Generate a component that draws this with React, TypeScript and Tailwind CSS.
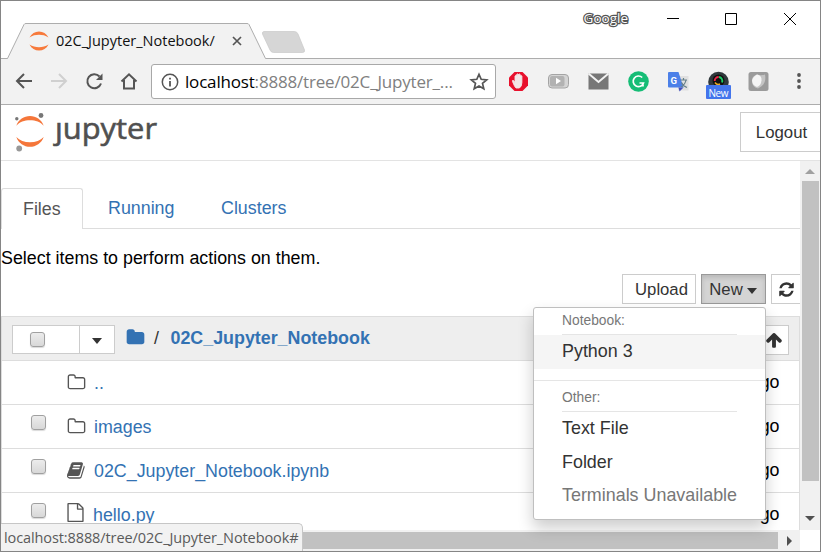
import type { ReactNode } from 'react';

const paths = {
  folderOpen:
    'M1600 1312v-704q0-40-28-68t-68-28h-704q-40 0-68-28t-28-68v-64q0-40-28-68t-68-28h-320q-40 0-68 28t-28 68v960q0 40 28 68t68 28h1216q40 0 68-28t28-68zm128-704v704q0 92-66 158t-158 66h-1216q-92 0-158-66t-66-158v-960q0-92 66-158t158-66h320q92 0 158 66t66 158v32h672q92 0 158 66t66 158z',
  folder:
    'M1728 608v704q0 92-66 158t-158 66h-1216q-92 0-158-66t-66-158v-960q0-92 66-158t158-66h320q92 0 158 66t66 158v32h672q92 0 158 66t66 158z',
  book:
    'M1639 478q40 57 18 129l-275 906q-19 64-76.500 107.500t-122.500 43.500h-923q-77 0-148.500-53.500t-99.500-131.500q-24-67-2-127 0-4 3-27t4-37q1-8-3-21.500t-3-19.500q2-11 8-21t16.500-23.500 16.500-23.500q23-38 45-91.500t30-91.500q3-10 .5-30t-.5-28q3-11 17-28t17-23q21-36 42-92t25-90q1-9-2.500-32t.5-28q4-13 22-30.500t22-22.500q19-26 42.500-84.500t27.500-96.500q1-8-3-25.500t-2-26.500q2-8 9-18t18-23 17-21q8-12 16.500-30.500t15-35 16-36 19.500-32 26.500-23.500 36-11.500 47.500 5.500l-1 3q38-9 51-9h761q74 0 114 56t18 130l-274 906q-36 119-71.500 153.500t-128.500 34.500h-869q-27 0-38 15-11 16-1 43 24 70 144 70h923q29 0 56-15.500t35-41.500l300-987q7-22 5-57 38 15 59 43zm-1064 2q-4 13 2 22.500t20 9.500h608q13 0 25.500-9.500t16.500-22.500l21-64q4-13-2-22.500t-20-9.500h-608q-13 0-25.500 9.500t-16.500 22.500zm-83 256q-4 13 2 22.500t20 9.500h608q13 0 25.500-9.500t16.500-22.500l21-64q4-13-2-22.500t-20-9.500h-608q-13 0-25.500 9.500t-16.500 22.500z',
  file:
    'M1596 380q28 28 48 76t20 88v1152q0 40-28 68t-68 28h-1344q-40 0-68-28t-28-68v-1600q0-40 28-68t68-28h896q40 0 88 20t76 48zm-444-244v376h376q-10-29-22-41l-313-313q-12-12-41-22zm384 1528v-1024h-416q-40 0-68-28t-28-68v-416h-768v1536h1280z',
  refresh:
    'M1639 1056q0 5-1 7-64 268-268 434.500t-478 166.500q-146 0-282.500-55t-243.500-157l-129 129q-19 19-45 19t-45-19-19-45v-448q0-26 19-45t45-19h448q26 0 45 19t19 45-19 45l-137 137q71 66 161 102t187 36q134 0 250-65t186-179q11-17 53-117 8-23 30-23h192q13 0 22.500 9.500t9.500 22.500zm25-800v448q0 26-19 45t-45 19h-448q-26 0-45-19t-19-45 19-45l138-138q-148-137-349-137-134 0-250 65t-186 179q-11 17-53 117-8 23-30 23h-199q-13 0-22.500-9.500t-9.500-22.500v-7q65-268 270-434.500t480-166.500q146 0 284 55.500t245 156.500l130-129q19-19 45-19t45 19 19 45z',
  arrowUp:
    'M1675 971q0 51-37 90l-75 75q-38 38-91 38-54 0-90-38l-294-293v704q0 52-37.500 84.500t-90.500 32.500h-128q-53 0-90.500-32.500t-37.500-84.500v-704l-294 293q-36 38-90 38t-90-38l-75-75q-38-38-38-90 0-53 38-91l651-651q35-37 90-37 54 0 91 37l651 651q37 39 37 91z',
};

function Glyph({ name, className }: { name: keyof typeof paths; className: string }) {
  return (
    <svg viewBox="0 0 1792 1792" className={'shrink-0 fill-current ' + className}>
      <path d={paths[name]} />
    </svg>
  );
}

function Checkbox() {
  return (
    <span className="block size-[15px] shrink-0 rounded-[3px] border border-[#a0a0a0] bg-linear-to-b from-[#ececec] to-[#d8d8d8] shadow-[0_1px_1px_rgba(0,0,0,0.15)]" />
  );
}

function Caret() {
  return <span className="block border-x-[5.5px] border-t-[6px] border-x-transparent border-t-[#333]" />;
}

function TitleBar() {
  return (
    <div className="relative flex h-[58px] shrink-0 border-b border-[#adadad] bg-white">
      <svg className="absolute left-0 top-0" width="320" height="58" viewBox="1 1 320 58">
        <path d="M1 58.5H7.500L24 24.500Q24.500 23.500 26 23.500H247Q248.500 23.500 249 24.500L265.500 58.500V60H1Z" fill="#f2f2f2" />
        <path d="M1 58.500H7.500L24 24.500Q24.500 23.500 26 23.500H247Q248.500 23.500 249 24.500L265.500 58.500" fill="none" stroke="#adadad" />
        <path d="M264 31.500H294.500Q297 31.500 298 34L304.500 50Q305 52.500 302.500 52.500H273.500Q271 52.500 270 50L262.500 34Q262 31.500 264 31.500Z" fill="#d6d6d6" stroke="#c9c9c9" strokeWidth=".7" />
      </svg>
      <div className="relative flex h-[35px] w-[264px] items-center self-end pl-[28px]">
        <svg width="20" height="20" viewBox="0 0 20 20" className="shrink-0 fill-[#f77a3c]">
          <path d="M.5 6.500C2.500 2.500 6 .5 10 .5s7.500 2 9.500 6C16.500 4.500 13.500 3.800 10 3.800S3.500 4.500.5 6.500Z" />
          <path d="M.5 13.500c2 4 5.500 6 9.500 6s7.500-2 9.500-6c-3 2-6 2.700-9.500 2.700S3.500 15.500.5 13.500Z" />
        </svg>
        <span className="ml-[7px] w-[159px] whitespace-nowrap font-['Open_Sans',sans-serif] text-[14.500px] text-[#111]">
          02C_Jupyter_Notebook/
        </span>
        <svg width="10" height="10" viewBox="0 0 10 10" className="ml-[17px] stroke-[#555]" strokeWidth="1.700">
          <path d="M1 1l8 8M9 1L1 9" />
        </svg>
      </div>
      <div className="ml-auto flex h-[36px] items-center">
        <span className="mr-[38px] font-['Open_Sans',sans-serif] text-[13.500px] leading-none text-white [-webkit-text-stroke:2.5px_#555] [paint-order:stroke_fill]">
          Google
        </span>
        <svg width="154" height="16" viewBox="0 0 154 16" fill="none" stroke="#000">
          <path d="M1 7.500h12M59.500 2.500h11v11h-11zM118 2l12 12M130 2l-12 12" />
        </svg>
      </div>
    </div>
  );
}

function Extensions() {
  return (
    <svg width="312" height="44" viewBox="508 60 312 44" className="ml-auto shrink-0">
      <path d="M514.500 72h8l5.500 5.500v8l-5.500 5.500h-8l-5.500-5.500v-8Z" fill="#e8112d" />
      <path d="M514.500 86l-2-4.500q-.5-1.500 1-1l1.500 2v-6.500q.8-1.200 1.600 0v3.500v-5q.9-1.200 1.800 0v5v-5q.9-1.200 1.800 0v5.500v-4q.8-1.200 1.700 0v6.500q0 4-2.500 5.500h-3.400Z" fill="#f3e6e7" stroke="#f3e6e7" strokeWidth=".9" />
      <rect x="548.500" y="74.500" width="20" height="13.500" rx="3.500" fill="#d4d4d4" stroke="#a4a4a4" />
      <rect x="550" y="76" width="14.500" height="10.500" rx="2" fill="#b2b2b2" />
      <path d="M556 77.800v6.400l5-3.200Z" fill="#fff" />
      <path d="M588.500 73.500h20v16h-20Z" fill="#777" />
      <path d="M588.500 73.500l10 8.500 10-8.500" fill="none" stroke="#f2f2f2" strokeWidth="2" />
      <circle cx="638.500" cy="81.500" r="10.300" fill="#16bd76" />
      <path d="M642.200 77.500A5.300 5.300 0 1 0 643.500 83h-4M643 82.500v4" fill="none" stroke="#fff" strokeWidth="1.700" />
      <path d="M678 76h10.500V90.500H678Z" fill="#e0e0e0" />
      <path d="M669 72h9.500l5 15.500h-14.500q-1 0-1-1v-13.500q0-1 1-1Z" fill="#4c80e8" />
      <path d="M678.500 87.500h5l-4 4Z" fill="#4350bd" />
      <text x="670.500" y="83.500" fill="#fff" fontFamily="Roboto" fontSize="9.500" fontWeight="700">G</text>
      <path d="M680.500 80h6.500M683.500 78v2M686 80q-1 5-5 7M681.500 82.500q2 4 5.500 5" fill="none" stroke="#66808a" strokeWidth="1.200" />
      <circle cx="718.500" cy="82" r="10.300" fill="#30383c" />
      <circle cx="718.500" cy="80.500" r="6" fill="#111" />
      <path d="M714.700 81a4 4 0 0 1 4-4" stroke="#ed2648" strokeWidth="1.800" fill="none" />
      <path d="M719 77a4 4 0 0 1 3 5.500" stroke="#1ccf67" strokeWidth="1.800" fill="none" />
      <path d="M715 82.500q2 3 5 1.500" stroke="#e9aa24" strokeWidth="1.500" fill="none" />
      <rect x="706" y="85" width="25" height="14" rx="1" fill="#4375ec" />
      <text x="708.500" y="96.500" fill="#fff" fontFamily="Open Sans" fontSize="10" textLength="20">New</text>
      <rect x="748.500" y="72" width="20" height="19" rx="2.500" fill="#9b9b9b" />
      <path d="M757 74.500q4.500 1.500 8 0 2 10-7 14-6.500-2-6-8.500 0-4 5-5.500Z" fill="#c4c4c4" />
      <path d="M757 74.500q5 1 4.500 6-.5 5-4.500 6.500-4.500-1.500-5-6.500 1-4 5-6Z" fill="#f5f5f5" />
      <g fill="#555">
        <circle cx="799" cy="75" r="1.900" />
        <circle cx="799" cy="81" r="1.900" />
        <circle cx="799" cy="87" r="1.900" />
      </g>
    </svg>
  );
}

function Toolbar() {
  return (
    <div className="flex h-[46px] shrink-0 items-center border-b border-[#adadad] bg-[#f2f2f2]">
      <svg width="150" height="44" viewBox="1 60 150 44" fill="none" stroke="#555" strokeWidth="2" className="shrink-0">
        <path d="M32 81H17.500M24 74l-7 7 7 7" />
        <path d="M51 81h14.500M59 74l7 7-7 7" stroke="#d0d0d0" />
        <path d="M99.500 76.500A7 7 0 1 0 101 83.500" />
        <path d="M102.500 73.500v6.500h-6.500Z" fill="#555" stroke="none" />
        <path d="M121.500 81.500l7.500-7.200 7.500 7.200M124 80v8.500h10V80" />
      </svg>
      <div className="flex h-[35px] w-[345px] shrink-0 items-center rounded-[3px] border border-[#a8a8a8] bg-white pl-[9px]">
        <svg width="18" height="18" viewBox="0 0 18 18" fill="none" stroke="#555" className="shrink-0">
          <circle cx="9" cy="9" r="7.700" strokeWidth="1.500" />
          <path d="M9 8v5.500M9 4.700v1.800" strokeWidth="1.800" />
        </svg>
        <span className="ml-[6px] w-[270px] whitespace-nowrap font-['Open_Sans',sans-serif] text-[17px] tracking-[-0.18px] text-[#808080]">
          <span className="text-black">localhost</span>:8888/tree/02C_Jupyter_...
        </span>
        <svg width="20" height="20" viewBox="0 0 20 20" fill="none" stroke="#555" strokeWidth="1.700" className="ml-[14px] shrink-0">
          <path d="M10 2.300l2.200 5 5.500.5-4.200 3.600 1.300 5.400-4.800-2.900-4.800 2.900 1.300-5.400-4.200-3.600 5.500-.5Z" />
        </svg>
      </div>
      <Extensions />
    </div>
  );
}

function Header() {
  return (
    <div className="flex h-[56px] shrink-0 items-start border-b border-[#e3e3e3]">
      <svg width="170" height="50" viewBox="1 105 170 50" className="shrink-0">
        <g fill="#f5763a">
          <path d="M16.300 125.800C18.500 119.500 24 116 30 116s11.500 3.500 13.700 9.800C40.500 122 35.500 120.300 30 120.300S19.500 122 16.300 125.800Z" />
          <path d="M16.300 137C18.500 143.300 24 146.800 30 146.800s11.500-3.500 13.700-9.800C40.500 140.500 35.500 142.300 30 142.300S19.500 140.500 16.300 137Z" />
        </g>
        <circle cx="41" cy="115.500" r="2.400" fill="#777" />
        <circle cx="16.800" cy="118.700" r="1.700" fill="#777" />
        <circle cx="19.200" cy="148.500" r="2.900" fill="#989898" />
        <text x="55" y="139.300" fontFamily="Open Sans" fontSize="30" fill="#505050" stroke="#505050" strokeWidth=".6" textLength="102" lengthAdjust="spacingAndGlyphs">
          ȷupyter
        </text>
      </svg>
      <button className="ml-auto mt-[7px] h-[40px] w-[80px] border border-r-0 border-[#ccc] pl-[2px] pt-px text-center text-[16.800px] text-[#333]">
        Logout
      </button>
    </div>
  );
}

function Row({ icon, name, check = true }: { icon: ReactNode; name: string; check?: boolean }) {
  return (
    <div className="flex h-[44px] shrink-0 border-b border-[#ddd]">
      <div className="w-[29px] shrink-0" />
      <div className="w-[36px] shrink-0 pt-[10px]">{check && <Checkbox />}</div>
      <div className="flex h-[42px] shrink-0 items-center">{icon}</div>
      <div className="pl-[8px] pt-[9px] text-[17.850px] leading-[26px] text-[#3372b3]">{name}</div>
      <div className="ml-auto pr-[19.500px] pt-[8px] text-[17.850px] leading-[26px] text-black">seconds ago</div>
    </div>
  );
}

function NewMenu() {
  return (
    <div className="absolute left-[533px] top-[307px] flex h-[213px] w-[233px] flex-col rounded-[3px] border border-[#bfbfbf] bg-white text-[17.900px] text-[#333] shadow-[0_8px_16px_rgba(0,0,0,0.2)]">
      <div className="mx-[28px] h-[27px] border-b border-[#e5e5e5] pt-[3px] text-[13.800px] leading-[20px] text-[#777]">Notebook:</div>
      <div className="h-[34px] bg-[#f5f5f5] pl-[28px] leading-[32px]">Python 3</div>
      <div className="mt-[11px] h-px shrink-0 bg-[#e5e5e5]" />
      <div className="mx-[28px] h-[31px] border-b border-[#e5e5e5] pt-[7px] text-[13.800px] leading-[20px] text-[#777]">Other:</div>
      <div className="h-[34px] pl-[28px] leading-[33px]">Text File</div>
      <div className="h-[34px] pl-[28px] leading-[33px]">Folder</div>
      <div className="h-[34px] whitespace-nowrap pl-[28px] leading-[31px] text-[#777]">Terminals Unavailable</div>
    </div>
  );
}

function FileBrowser() {
  return (
    <div className="flex min-w-0 flex-1 flex-col overflow-hidden text-[17.850px]">
      <div className="flex h-[68px] shrink-0 items-end border-b border-[#ddd] text-[#3372b3]">
        <div className="-mb-px h-[41px] w-[82px] rounded-t-[3px] border border-b-0 border-[#ddd] bg-white pl-[21px] leading-[40px] text-[#555]">Files</div>
        <div className="h-[39px] w-[113px] pl-[25px] leading-[39px]">Running</div>
        <div className="h-[39px] pl-[25px] leading-[39px]">Clusters</div>
      </div>
      <div className="h-[45px] shrink-0 pt-[16px] leading-[26px] text-black">Select items to perform actions on them.</div>
      <div className="flex h-[42px] shrink-0 justify-end text-[16.700px] text-[#333]">
        <button className="mr-[5px] h-[30px] w-[74px] border border-[#ccc] pl-[5px] text-center leading-[29px]">Upload</button>
        <button className="mr-[5px] flex h-[30px] w-[65px] items-center justify-center gap-[4px] border border-[#999] bg-[#d4d4d4] pr-px pt-px shadow-[inset_0_3px_5px_rgba(0,0,0,0.125)]">
          New
          <span className="mt-[3px]">
            <Caret />
          </span>
        </button>
        <button className="flex h-[30px] w-[29px] items-center border border-r-0 border-[#ccc] pl-[6px]">
          <Glyph name="refresh" className="size-[17px]" />
        </button>
      </div>
      <div className="flex flex-1 flex-col overflow-hidden border-x border-t border-[#ddd]">
        <div className="flex h-[44px] shrink-0 items-start border-b border-[#ddd] bg-[#eee]">
          <div className="ml-[10px] mt-[8px] flex h-[29px] w-[103px] shrink-0 border border-[#ccc] bg-white">
            <div className="flex w-[67px] items-center border-r border-[#ccc] pl-[17px]">
              <Checkbox />
            </div>
            <div className="flex flex-1 items-center justify-center pt-[3px]">
              <Caret />
            </div>
          </div>
          <Glyph name="folder" className="ml-[11px] mt-[11px] size-[19px] text-[#3372b3]" />
          <span className="ml-[9px] w-[16.500px] pt-[8px] leading-[26px] text-[#333]">/</span>
          <span className="pt-[8px] font-bold leading-[26px] text-[#3372b3]">02C_Jupyter_Notebook</span>
          <div className="ml-auto mr-[10px] mt-[8px] flex h-[30px] w-[34px] items-center justify-center border border-[#ccc] bg-white pl-[3px] text-[#333]">
            <Glyph name="arrowUp" className="size-[18px]" />
          </div>
        </div>
        <Row check={false} name=".." icon={<Glyph name="folderOpen" className="size-[19px] text-[#555]" />} />
        <Row name="images" icon={<Glyph name="folderOpen" className="size-[19px] text-[#555]" />} />
        <Row name="02C_Jupyter_Notebook.ipynb" icon={<Glyph name="book" className="size-[19px] text-[#555]" />} />
        <Row name="hello.py" icon={<Glyph name="file" className="-ml-px mb-[4px] size-[19px] text-[#555]" />} />
      </div>
    </div>
  );
}

export default function App() {
  return (
    <div className="relative flex h-[552px] w-[821px] flex-col overflow-hidden border border-[#858585] bg-white font-['Liberation_Sans',Arial,sans-serif]">
      <TitleBar />
      <Toolbar />
      <Header />
      <div className="flex h-[369px] shrink-0">
        <FileBrowser />
        <div className="flex w-[20px] shrink-0 flex-col items-center bg-[#f1f1f1]">
          <span className="mt-[8px] block border-x-[5px] border-b-[5px] border-x-transparent border-b-[#a0a0a0]" />
          <span className="mt-[7px] block h-[300px] w-[17px] bg-[#c1c1c1]" />
          <span className="mt-[35px] block border-x-[5px] border-t-[5px] border-x-transparent border-t-[#505050]" />
        </div>
      </div>
      <div className="flex flex-1">
        <div className="flex w-[799px] items-center bg-[#f1f1f1]">
          <span className="block h-[17px] w-[777px] bg-[#c1c1c1]" />
          <span className="ml-[9px] block border-y-[5px] border-l-[5px] border-y-transparent border-l-[#505050]" />
        </div>
      </div>
      <div className="absolute -left-px -top-px h-0 w-0">
        <NewMenu />
      </div>
      <div className="absolute -left-px bottom-0 h-[28px] w-[303px] whitespace-nowrap rounded-tr-[5px] border-r border-t border-[#c6c6c6] bg-[#f2f2f2] pl-[4px] font-['Open_Sans',sans-serif] text-[14.500px] leading-[27px] tracking-[-0.1px] text-[#5a5a5a]">
        localhost:8888/tree/02C_Jupyter_Notebook#
      </div>
    </div>
  );
}
